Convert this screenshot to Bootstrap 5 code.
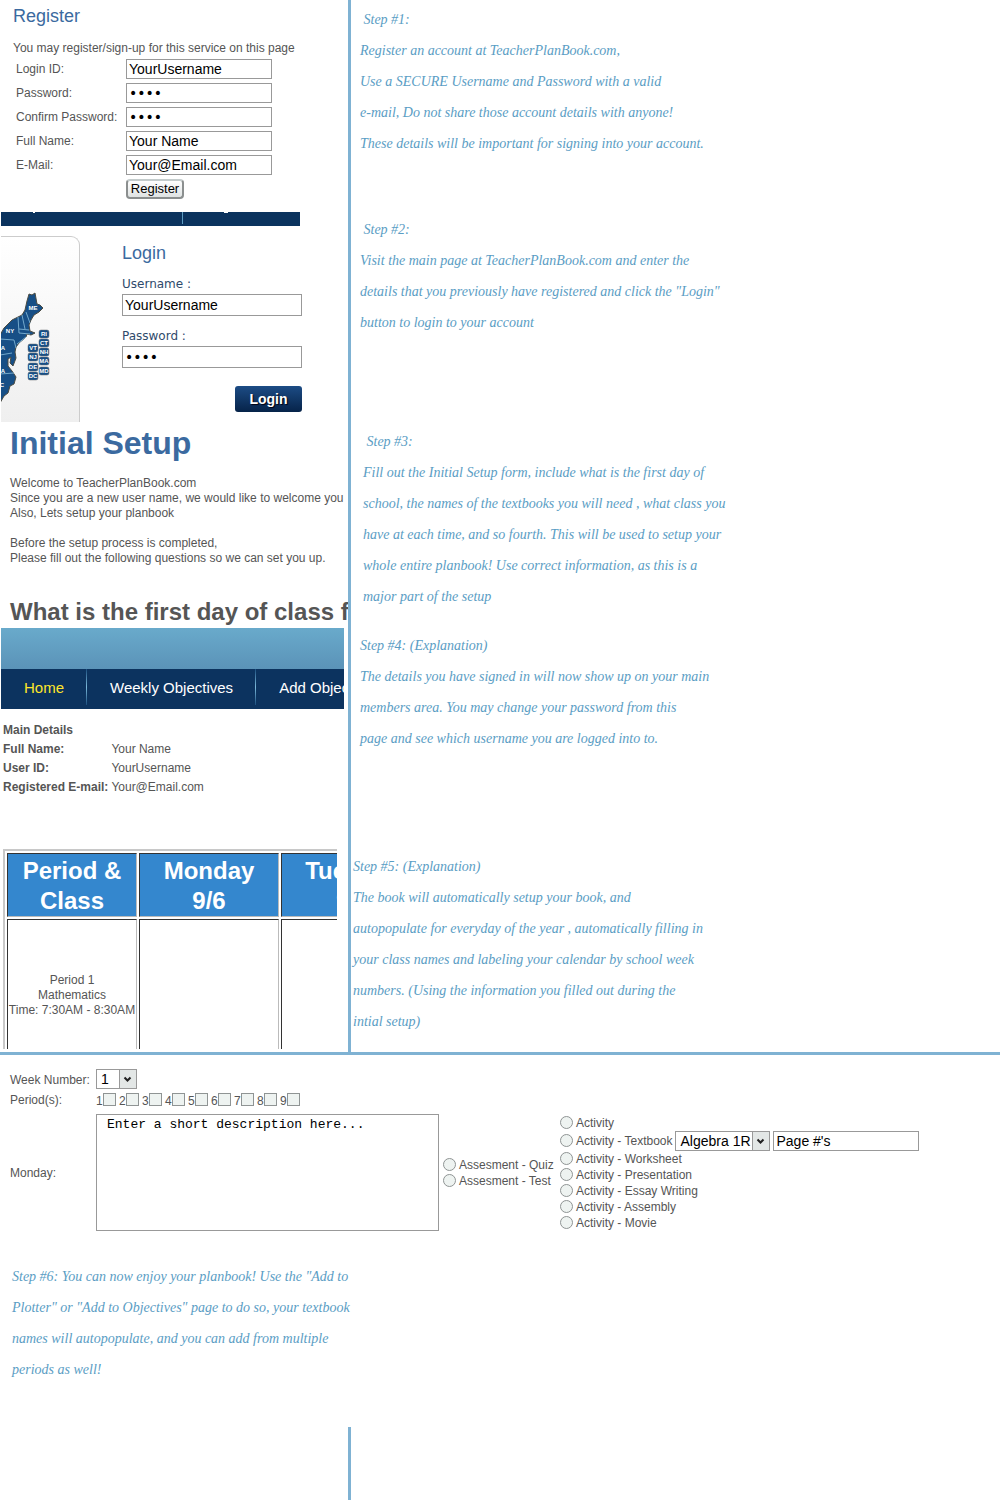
<!DOCTYPE html>
<html lang="en">
<head>
<meta charset="utf-8">
<meta name="viewport" content="width=device-width, initial-scale=1">
<title>TeacherPlanBook.com - Getting Started</title>
<link href="https://cdn.jsdelivr.net/npm/bootstrap@5.3.0/dist/css/bootstrap.min.css" rel="stylesheet">
<style>
body{font:12px/15px "Liberation Sans",Arial,sans-serif;color:#555;background:#fff}
.shot{flex:0 0 351px;border-right:3px solid #7fb2d3;overflow:hidden}
.step-text{font:italic 14px/31px "Liberation Serif","Times New Roman",serif;color:#5a9dc4;margin:0}
.guide-row .step-text{padding:4px 0 0 9px}
.r1{min-height:212px}.r2{min-height:210px}.r3{min-height:206px}.r4{min-height:221px}.r5{min-height:203px}
.guide-row.r2 .step-text{padding-top:2px}
.guide-row.r3 .step-text{padding-left:12px}
.guide-row.r4 .step-text{padding-top:2px}
.guide-row.r5 .step-text{padding:2px 0 0 2px}
.register-box{padding:5px 0 0 13px}
.register-box p{margin:14px 0 1px}
.panel-title{font-size:18px;line-height:22px;color:#3b6aa0;margin:0;font-weight:400}
.field{height:20px;border:1px solid #999;border-radius:0;padding:0 2px;font-size:14px;line-height:18px;color:#000;background:#fff;width:146px}
.field[type=password]{font-family:"DejaVu Sans",sans-serif}
.field-row{display:flex;align-items:center;height:24px}
.field-row label,.field-row span{flex:0 0 113px;padding-left:3px;white-space:nowrap}
.reg-btn{height:20px;width:58px;padding:0;font-size:13px;line-height:16px;color:#000;border:2px solid #8b8f8f;border-top-color:#c4cccc;border-radius:4px;background:linear-gradient(#fff,#dfe3e3)}
.top-strip{width:299px;height:14px;margin-left:1px;background:#0b335e;display:block}
.map-box{width:79px;height:186px;margin:10px 0 0 1px;border:1px solid #ccc;border-width:1px 1px 0 0;border-radius:0 9px 0 0;background:linear-gradient(#fff,#efefef);overflow:hidden}
.login-form{width:180px;margin:16px 0 0 42px}
.login-form label{font:12px/20px "DejaVu Sans",Verdana,sans-serif;color:#2f4a6b;display:block;margin-top:10px}
.login-form .field{width:100%;height:22px;display:block}
.login-action{padding-top:18px;text-align:right}
.login-btn{width:67px;height:26px;border:0;border-radius:3px;padding:0;font-size:14px;line-height:24px;font-weight:700;color:#fff;background:linear-gradient(#1c4c85,#062349);text-shadow:1px 1px 1px #001}
.setup-box{padding:2px 0 0 10px}
.setup-box p{margin:0;padding-top:14px;white-space:nowrap}
.setup-title{font-size:32px;line-height:38px;font-weight:700;color:#3b6aa0;margin:0}
.question{font-size:24px;line-height:30px;font-weight:700;white-space:nowrap;margin:31px 0 0}
.banner{width:343px;margin-left:1px;height:41px;background:linear-gradient(#69aacb,#5b93b8)}
.site-nav{width:343px;margin-left:1px;height:40px;background:#0c335f;overflow:hidden;white-space:nowrap}
.site-nav a{font-size:15px;line-height:38px;height:40px;color:#fff;text-decoration:none;padding:0 22px 0 23px;flex:none}
.site-nav a.current{color:#ffe629}
.site-nav i{flex:none;width:1px;height:36px;background:linear-gradient(#1c5080,#7cb9da,#1c5080)}
.details{margin:12px 0 0 3px}
.details th,.details td{line-height:15px;padding:2px 3px 2px 0;white-space:nowrap}
.plan-wrap{width:334px;height:200px;margin-left:3px;overflow:hidden}
.plan{border-collapse:separate;border-spacing:2px;border:2px solid #c8c8c8;width:426px;table-layout:fixed}
.plan th,.plan td{border:1px solid #333;border-right-color:#bbb;border-bottom-color:#bbb;text-align:center;vertical-align:middle;padding:2px 0 0}
.plan th{background:#3487ce;color:#fff;font-size:24px;line-height:30px}
.plan td{height:150px;white-space:nowrap}
.col-period{width:130px}.col-day{width:140px}
.week-form{border-top:3px solid #7fb2d3;padding:14px 0 0 10px}
.week-form .cap{flex:0 0 86px;padding-top:2px}
.pick{appearance:none;width:95px;height:20px;border:1px solid #999;border-radius:0;background:#fff;color:#000;font-size:14px;line-height:18px;padding:0 18px 0 4px}
.pick.narrow{width:41px}
.pick-wrap{position:relative;display:inline-flex}
.pick-wrap svg{position:absolute;right:1px;top:1px;pointer-events:none}
.week-form input[type=checkbox],.week-form input[type=radio]{appearance:none;width:13px;height:13px;border:1px solid #8f9494;background:#eef3f1;margin:0;flex:none}
.week-form input[type=radio]{border-radius:50%}
.periods{height:21px}
.ticks label{display:flex;align-items:center;width:23px}
.ticks span{padding-top:3px}
.notes{width:343px;height:117px;border:1px solid #999;padding:1px 10px;font:13px/18px "Liberation Mono","Courier New",monospace;color:#000;resize:none;display:block}
.quiz{width:117px}
.opt{display:flex;align-items:center;gap:3px;height:16px;white-space:nowrap}
.opt.tall{height:20px}
.opt label{padding-top:2px}
.closing{padding:30px 0 0 12px}
.stub{width:351px;height:73px;margin-top:42px;border-right:3px solid #7fb2d3}
</style>
<script src="https://cdn.jsdelivr.net/npm/bootstrap@5.3.0/dist/js/bootstrap.bundle.min.js"></script>
</head>
<body>
<main>
<section class="guide-row r1 d-flex">
  <div class="shot">
    <div class="register-box">
      <h2 class="panel-title">Register</h2>
      <p>You may register/sign-up for this service on this page</p>
      <form>
        <div class="field-row"><label for="lid">Login ID:</label><input class="field" id="lid" value="YourUsername"></div>
        <div class="field-row"><label for="pw">Password:</label><input class="field" id="pw" type="password" value="abcd"></div>
        <div class="field-row"><label for="pw2">Confirm Password:</label><input class="field" id="pw2" type="password" value="abcd"></div>
        <div class="field-row"><label for="fn">Full Name:</label><input class="field" id="fn" value="Your Name"></div>
        <div class="field-row"><label for="em">E-Mail:</label><input class="field" id="em" value="Your@Email.com"></div>
        <div class="field-row"><span></span><button class="reg-btn" type="button">Register</button></div>
      </form>
    </div>
  </div>
  <p class="step-text">&nbsp;Step #1:<br>Register an account at TeacherPlanBook.com,<br>Use a SECURE Username and Password with a valid<br>e-mail, Do not share those account details with anyone!<br>These details will be important for signing into your account.</p>
</section>

<section class="guide-row r2 d-flex">
  <div class="shot">
    <svg class="top-strip" viewBox="0 0 299 14"><path d="M32 0h2v1h-2zM223 0h4v1h-4z" fill="#fff"/><path d="M181.500 0v12" stroke="#5d9cc2"/></svg>
    <div class="d-flex">
      <div class="map-box">
        <svg width="78" height="185" viewBox="1 0 78 185" font-family="Liberation Sans,Arial,sans-serif" font-size="6" font-weight="700" fill="#fff" text-anchor="middle">
          <path d="M0 98 4 91 12 83 22 78 25 73 27 64 29 57 32 58 35 56 37 67 40 68 43 71 39 75 34 78 31 83 29 88 30 94 35 96 31 98 27 97 26 100 19 106 16 110 15 115 16 121 13 129 10 126 11 120 8 122 8 129 12 134 16 140 14 147 10 149 8 156 4 159 0 166Z" fill="#174f86" stroke="#4b4b42"/>
          <path d="M22 78l3 14M26 75l4 11M18 80l1 16 11 1M19 92l10 1M0 102l14 1 2 8M0 118l12-2M0 137l14-1M17 107l9-7" fill="none" stroke="#73a9cc"/>
          <text x="33" y="73">ME</text><text x="10" y="96">NY</text><text x="3" y="113">A</text><text x="3" y="136">A</text><text x="2" y="150">C</text>
          <g fill="#174f86" stroke="#6a6f70" stroke-width=".5"><rect x="39" y="93" width="10" height="8" rx="2"/><rect x="39" y="102" width="10" height="8" rx="2"/><rect x="39" y="111" width="10" height="8" rx="2"/><rect x="39" y="120" width="10" height="8" rx="2"/><rect x="39" y="130" width="10" height="8" rx="2"/><rect x="28" y="107" width="10" height="8" rx="2"/><rect x="28" y="116" width="10" height="8" rx="2"/><rect x="28" y="126" width="10" height="8" rx="2"/><rect x="28" y="135" width="10" height="8" rx="2"/></g>
          <text x="44" y="99">RI</text><text x="44" y="108">CT</text><text x="44" y="117">NH</text><text x="44" y="126">MA</text><text x="44" y="136">MD</text><text x="33" y="113">VT</text><text x="33" y="122">NJ</text><text x="33" y="132">DE</text><text x="33" y="141">DC</text>
        </svg>
      </div>
      <form class="login-form">
        <h2 class="panel-title">Login</h2>
        <label for="un">Username :</label><input class="field" id="un" value="YourUsername">
        <label for="lp">Password :</label><input class="field" id="lp" type="password" value="abcd">
        <div class="login-action"><button class="login-btn" type="button">Login</button></div>
      </form>
    </div>
  </div>
  <p class="step-text">&nbsp;Step #2:<br>Visit the main page at TeacherPlanBook.com and enter the<br>details that you previously have registered and click the "Login"<br>button to login to your account</p>
</section>

<section class="guide-row r3 d-flex">
  <div class="shot">
    <div class="setup-box">
      <h1 class="setup-title">Initial Setup</h1>
      <p>Welcome to TeacherPlanBook.com<br>Since you are a new user name, we would like to welcome you<br>Also, Lets setup your planbook<br><br>Before the setup process is completed,<br>Please fill out the following questions so we can set you up.</p>
      <h2 class="question">What is the first day of class f</h2>
    </div>
  </div>
  <p class="step-text">&nbsp;Step #3:<br>Fill out the Initial Setup form, include what is the first day of<br>school, the names of the textbooks you will need , what class you<br>have at each time, and so fourth. This will be used to setup your<br>whole entire planbook! Use correct information, as this is a<br>major part of the setup</p>
</section>

<section class="guide-row r4 d-flex">
  <div class="shot">
    <div class="banner"></div>
    <nav class="site-nav d-flex"><a class="current" href="#">Home</a><i></i><a href="#">Weekly Objectives</a><i></i><a href="#">Add Objectives</a></nav>
    <table class="details">
      <tr><th colspan="2">Main Details</th></tr>
      <tr><th>Full Name:</th><td>Your Name</td></tr>
      <tr><th>User ID:</th><td>YourUsername</td></tr>
      <tr><th>Registered E-mail:</th><td>Your@Email.com</td></tr>
    </table>
  </div>
  <p class="step-text">Step #4: (Explanation)<br>The details you have signed in will now show up on your main<br>members area. You may change your password from this<br>page and see which username you are logged into to.</p>
</section>

<section class="guide-row r5 d-flex">
  <div class="shot">
    <div class="plan-wrap">
      <table class="plan">
        <colgroup><col class="col-period"><col class="col-day"><col></colgroup>
        <tr><th>Period &amp;<br>Class</th><th>Monday<br>9/6</th><th>Tuesday<br>9/7</th></tr>
        <tr><td>Period 1<br>Mathematics<br>Time: 7:30AM - 8:30AM</td><td></td><td></td></tr>
      </table>
    </div>
  </div>
  <p class="step-text">Step #5: (Explanation)<br>The book will automatically setup your book, and<br>autopopulate for everyday of the year , automatically filling in<br>your class names and labeling your calendar by school week<br>numbers. (Using the information you filled out during the<br>intial setup)</p>
</section>

<form class="week-form">
  <div class="d-flex align-items-center">
    <label class="cap" for="wk">Week Number:</label>
    <span class="pick-wrap"><select class="pick narrow" id="wk"><option>1</option></select><svg width="17" height="18"><path d="M0 0h17v18H0z" fill="#e3e7e6"/><path d="M.5 0v18" stroke="#999"/><path d="M5.500 7.500l3 3 3-3" fill="none" stroke="#222" stroke-width="2"/></svg></span>
  </div>
  <div class="periods d-flex align-items-center mb-1">
    <span class="cap">Period(s):</span>
    <div class="ticks d-flex"><label><span>1</span><input type="checkbox"></label><label><span>2</span><input type="checkbox"></label><label><span>3</span><input type="checkbox"></label><label><span>4</span><input type="checkbox"></label><label><span>5</span><input type="checkbox"></label><label><span>6</span><input type="checkbox"></label><label><span>7</span><input type="checkbox"></label><label><span>8</span><input type="checkbox"></label><label><span>9</span><input type="checkbox"></label></div>
  </div>
  <div class="d-flex align-items-center">
    <label class="cap" for="nt">Monday:</label>
    <textarea class="notes" id="nt">Enter a short description here...</textarea>
    <div class="ms-1 quiz">
      <div class="opt"><input type="radio" name="k" id="a1"><label for="a1">Assesment - Quiz</label></div>
      <div class="opt"><input type="radio" name="k" id="a2"><label for="a2">Assesment - Test</label></div>
    </div>
    <div class="acts">
      <div class="opt"><input type="radio" name="k" id="b1"><label for="b1">Activity</label></div>
      <div class="opt tall"><input type="radio" name="k" id="b2"><label for="b2">Activity - Textbook</label>
        <span class="pick-wrap"><select class="pick" aria-label="Textbook"><option>Algebra 1R</option></select><svg width="17" height="18"><path d="M0 0h17v18H0z" fill="#e3e7e6"/><path d="M.5 0v18" stroke="#999"/><path d="M5.500 7.500l3 3 3-3" fill="none" stroke="#222" stroke-width="2"/></svg></span>
        <input class="field" aria-label="Pages" value="Page #'s"></div>
      <div class="opt"><input type="radio" name="k" id="b3"><label for="b3">Activity - Worksheet</label></div>
      <div class="opt"><input type="radio" name="k" id="b4"><label for="b4">Activity - Presentation</label></div>
      <div class="opt"><input type="radio" name="k" id="b5"><label for="b5">Activity - Essay Writing</label></div>
      <div class="opt"><input type="radio" name="k" id="b6"><label for="b6">Activity - Assembly</label></div>
      <div class="opt"><input type="radio" name="k" id="b7"><label for="b7">Activity - Movie</label></div>
    </div>
  </div>
</form>
<p class="step-text closing">Step #6: You can now enjoy your planbook! Use the "Add to<br>Plotter" or "Add to Objectives" page to do so, your textbook<br>names will autopopulate, and you can add from multiple<br>periods as well!</p>
<div class="stub"></div>
</main>
</body>
</html>
